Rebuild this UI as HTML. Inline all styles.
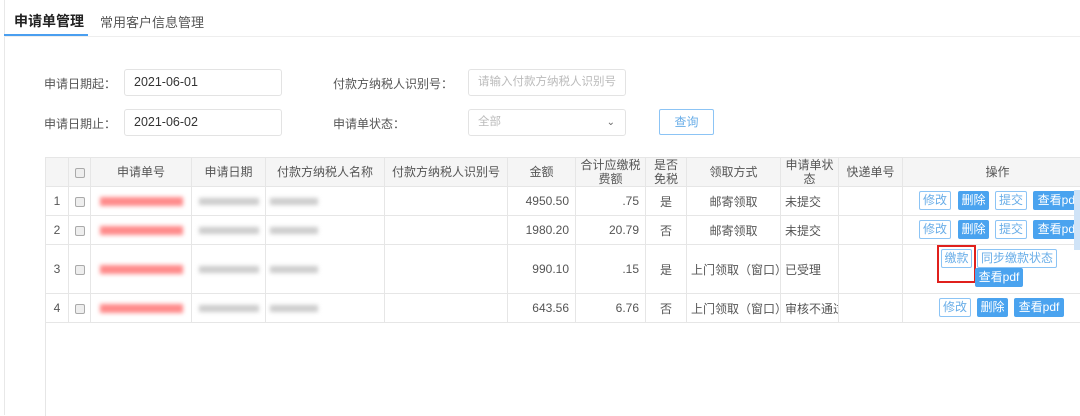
<!DOCTYPE html><html><head><meta charset="utf-8"><style>
*{box-sizing:border-box;margin:0;padding:0}
body{width:1080px;height:415px;overflow:hidden;background:#fff;font-family:"Liberation Sans","Noto Sans CJK SC",sans-serif;font-size:12px;color:#555;position:relative}
.a{position:absolute}
.inp{position:absolute;border:1px solid #e3e3e3;border-radius:3px;height:27px;line-height:25px;padding-left:9px;font-size:12.5px;color:#333}
.lbl{position:absolute;font-size:12px;color:#555}
.btn{position:absolute;height:19px;line-height:17px;font-size:12px;text-align:center;border-radius:2px}
.o{border:1px solid #8cc4f5;color:#6aaee8;background:#fff}
.f{background:#4aa3ef;color:#fff;border:1px solid #4aa3ef}
table{position:absolute;left:45px;top:157px;width:1047px;border-collapse:collapse;table-layout:fixed}
td{border:1px solid #e6e6e6;font-size:12px;color:#555;text-align:center;overflow:hidden;white-space:nowrap;padding:0}
thead td{background:#f5f5f5;height:29px;line-height:14px;white-space:normal}
.r{text-align:right;padding-right:6px}
.l{text-align:left;padding-left:4px}
.cb{display:inline-block;width:10px;height:10px;border:1px solid #aaa;border-radius:2px;background:#eee;vertical-align:middle}
.red{display:inline-block;width:83px;height:9px;background:#ff8a8a;filter:blur(2px);vertical-align:middle}
.g{display:inline-block;height:7px;background:#ccc;filter:blur(2px);vertical-align:middle}
</style></head><body>
<div class="a" style="left:4px;top:0;width:1px;height:415px;background:#e8e8e8"></div>
<div class="a" style="left:4px;top:36px;width:1076px;height:1px;background:#eee"></div>
<div class="a" style="left:14px;top:11px;font-size:14px;color:#222;font-weight:bold">申请单管理</div>
<div class="a" style="left:4px;top:34px;width:84px;height:2px;background:#4a9ff0"></div>
<div class="a" style="left:100px;top:12px;font-size:13px;color:#555">常用客户信息管理</div>
<div class="lbl" style="left:44px;top:75px">申请日期起：</div>
<div class="inp" style="left:124px;top:69px;width:158px">2021-06-01</div>
<div class="lbl" style="left:44px;top:115px">申请日期止：</div>
<div class="inp" style="left:124px;top:109px;width:158px">2021-06-02</div>
<div class="lbl" style="left:333px;top:75px">付款方纳税人识别号：</div>
<div class="inp" style="left:468px;top:69px;width:158px;color:#bbb;font-size:11.5px">请输入付款方纳税人识别号</div>
<div class="lbl" style="left:333px;top:115px">申请单状态：</div>
<div class="inp" style="left:468px;top:109px;width:158px;color:#bbb;font-size:11.5px">全部<span style="position:absolute;right:10px;top:0;color:#666;font-size:10px">&#8964;</span></div>
<div class="btn o" style="left:659px;top:109px;width:55px;height:26px;line-height:24px">查询</div>
<table>
<colgroup><col style="width:23px"><col style="width:22px"><col style="width:101px"><col style="width:74px"><col style="width:119px"><col style="width:123px"><col style="width:68px"><col style="width:70px"><col style="width:41px"><col style="width:94px"><col style="width:58px"><col style="width:64px"><col style="width:190px"></colgroup>
<thead><tr><td></td><td><span class="cb"></span></td><td>申请单号</td><td>申请日期</td><td>付款方纳税人名称</td><td>付款方纳税人识别号</td><td>金额</td><td>合计应缴税<br>费额</td><td>是否<br>免税</td><td>领取方式</td><td>申请单状<br>态</td><td>快递单号</td><td>操作</td></tr></thead>
<tr style="height:29px"><td>1</td><td><span class="cb"></span></td><td><span class="red"></span></td><td><span class="g" style="width:60px"></span></td><td class="l"><span class="g" style="width:48px"></span></td><td></td><td class="r">4950.50</td><td class="r">.75</td><td>是</td><td>邮寄领取</td><td class="l">未提交</td><td></td><td></td></tr>
<tr style="height:29px"><td>2</td><td><span class="cb"></span></td><td><span class="red"></span></td><td><span class="g" style="width:60px"></span></td><td class="l"><span class="g" style="width:48px"></span></td><td></td><td class="r">1980.20</td><td class="r">20.79</td><td>否</td><td>邮寄领取</td><td class="l">未提交</td><td></td><td></td></tr>
<tr style="height:49px"><td>3</td><td><span class="cb"></span></td><td><span class="red"></span></td><td><span class="g" style="width:60px"></span></td><td class="l"><span class="g" style="width:48px"></span></td><td></td><td class="r">990.10</td><td class="r">.15</td><td>是</td><td class="l">上门领取（窗口）</td><td class="l">已受理</td><td></td><td></td></tr>
<tr style="height:29px"><td>4</td><td><span class="cb"></span></td><td><span class="red"></span></td><td><span class="g" style="width:60px"></span></td><td class="l"><span class="g" style="width:48px"></span></td><td></td><td class="r">643.56</td><td class="r">6.76</td><td>否</td><td class="l">上门领取（窗口）</td><td class="l">审核不通过</td><td></td><td></td></tr>
<tr style="height:93px"><td colspan="13" style="border-bottom:none;border-right:none"></td></tr>
</table>
<div class="btn o" style="left:919px;top:191px;width:32px">修改</div>
<div class="btn f" style="left:958px;top:191px;width:31px">删除</div>
<div class="btn o" style="left:995px;top:191px;width:32px">提交</div>
<div class="btn f" style="left:1033px;top:191px;width:50px">查看pdf</div>
<div class="btn o" style="left:919px;top:220px;width:32px">修改</div>
<div class="btn f" style="left:958px;top:220px;width:31px">删除</div>
<div class="btn o" style="left:995px;top:220px;width:32px">提交</div>
<div class="btn f" style="left:1033px;top:220px;width:50px">查看pdf</div>
<div class="btn o" style="left:941px;top:249px;width:31px">缴款</div>
<div class="a" style="left:937px;top:245px;width:39px;height:38px;border:2px solid #e0201c"></div>
<div class="btn o" style="left:977px;top:249px;width:80px">同步缴款状态</div>
<div class="btn f" style="left:975px;top:268px;width:48px">查看pdf</div>
<div class="btn o" style="left:939px;top:298px;width:32px">修改</div>
<div class="btn f" style="left:977px;top:298px;width:31px">删除</div>
<div class="btn f" style="left:1014px;top:298px;width:50px">查看pdf</div>
<div class="a" style="left:1074px;top:190px;width:6px;height:60px;background:#cfe3f7"></div>
</body></html>
